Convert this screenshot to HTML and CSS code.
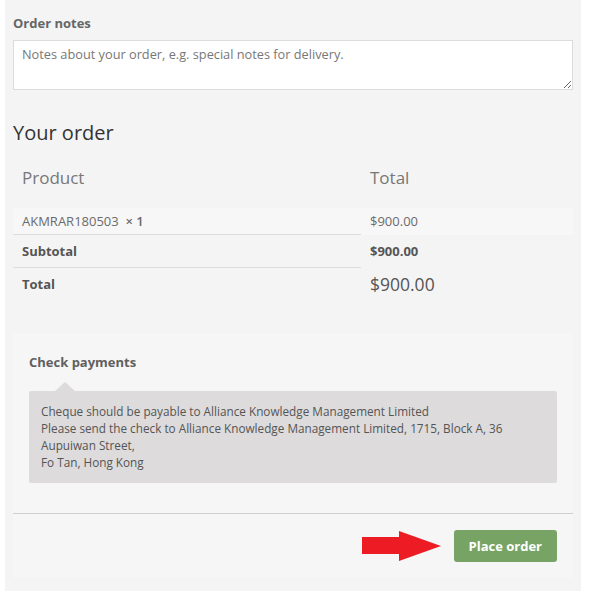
FILE: index.html
```html
<!DOCTYPE html>
<html>
<head>
<meta charset="utf-8">
<link rel="stylesheet" href="styles.css">
</head>
<body>
<div class="panel">
  <div class="notes-label">Order notes</div>
  <textarea class="notes" placeholder="Notes about your order, e.g. special notes for delivery."></textarea>

  <h3 class="order-title">Your order</h3>
  <table class="order-table">
    <thead>
      <tr>
        <th class="col-product">Product</th>
        <th class="col-total">Total</th>
      </tr>
    </thead>
    <tbody>
      <tr class="item-row">
        <td class="col-product">AKMRAR180503&nbsp; <strong class="qty">× 1</strong></td>
        <td class="col-total">$900.00</td>
      </tr>
    </tbody>
    <tfoot>
      <tr class="subtotal-row">
        <th class="col-product">Subtotal</th>
        <td class="col-total"><strong>$900.00</strong></td>
      </tr>
      <tr class="total-row">
        <th class="col-product">Total</th>
        <td class="col-total"><span class="grand">$900.00</span></td>
      </tr>
    </tfoot>
  </table>

  <div class="payment">
    <div class="methods">
      <div class="method-label">Check payments</div>
      <div class="method-box">
        Cheque should be payable to Alliance Knowledge Management Limited<br>
        Please send the check to Alliance Knowledge Management Limited, 1715, Block A, 36 Aupuiwan Street,<br>
        Fo Tan, Hong Kong
      </div>
    </div>
    <div class="place-row">
      <svg class="arrow" width="80" height="32" viewBox="0 0 80 32" aria-hidden="true">
        <polygon points="0,7 37,7 37,1 79,16 37,31 37,24 0,24" fill="#ed1c24"/>
      </svg>
      <button class="place-btn">Place order</button>
    </div>
  </div>
</div>
</body>
</html>
```

FILE: styles.css
```css
* { box-sizing: border-box; }
html, body { margin: 0; padding: 0; background: #ffffff; }
body {
  font-family: "Open Sans", "Liberation Sans", sans-serif;
  font-size: 13px;
  color: #6b6b6b;
}
.panel {
  margin-left: 5px;
  width: 576px;
  min-height: 591px;
  background: #f4f4f4;
  padding: 13px 8px 13px 8px;
}
.notes-label {
  font-weight: 700;
  font-size: 13px;
  line-height: 20px;
  color: #666666;
}
.notes {
  display: block;
  margin-top: 7px;
  width: 560px;
  height: 50px;
  border: 1px solid #dcdcdc;
  background: #ffffff;
  padding: 4px 8px 3px 8px;
  font-family: "Open Sans", "Liberation Sans", sans-serif;
  font-size: 12.75px;
  line-height: 18px;
  color: #555;
  resize: vertical;
  outline: none;
}
.notes::placeholder { color: #777777; opacity: 1; }
.order-title {
  margin: 31px 0 0 0;
  font-size: 20px;
  line-height: 24px;
  font-weight: 400;
  color: #333333;
}
.order-table {
  margin-top: 12px;
  width: 560px;
  border-collapse: collapse;
  table-layout: fixed;
}
.order-table .col-product { width: 348px; }
.order-table th, .order-table td {
  text-align: left;
  padding: 7px 9px;
  font-size: 13px;
  line-height: 18px;
  color: #6b6b6b;
}
.order-table thead th {
  font-size: 17px;
  line-height: 24px;
  font-weight: 400;
  color: #777777;
  padding: 9px 9px 18px 9px;
}
.item-row td {
  background: #f7f7f7;
  padding: 4px 9px;
}
.item-row td.col-product,
.subtotal-row .col-product {
  border-bottom: 1px solid #dddddd;
}
.qty { font-weight: 600; color: #6b6b6b; }
.subtotal-row th, .total-row th { font-weight: 700; color: #555555; }
.subtotal-row strong { color: #555555; }
.total-row th, .total-row td { padding: 4px 9px 6px 9px; }
.grand {
  font-size: 17.5px;
  line-height: 24px;
  color: #555555;
}
.payment {
  margin-top: 31px;
  background: #f6f6f6;
}
.methods {
  padding: 20px 16px 30px 16px;
  border-bottom: 1px solid #cfcfcf;
}
.method-label {
  font-weight: 700;
  font-size: 13px;
  line-height: 18px;
  color: #606060;
}
.method-box {
  position: relative;
  margin-top: 20px;
  background: #dddbdb;
  border-radius: 2px;
  padding: 12px 12px 12px 12px;
  font-size: 11.75px;
  line-height: 17px;
  color: #555555;
}
.method-box::before {
  content: "";
  position: absolute;
  left: 26px;
  top: -9px;
  border-left: 10px solid transparent;
  border-right: 10px solid transparent;
  border-bottom: 9px solid #dddbdb;
}
.place-row {
  display: flex;
  justify-content: flex-end;
  align-items: center;
  gap: 12px;
  padding: 16px 16px 16px 16px;
}
.arrow { display: block; }
.place-btn {
  height: 32px;
  padding: 0 15px;
  background: #77a464;
  border: none;
  border-radius: 3px;
  color: #ffffff;
  font-family: "Open Sans", "Liberation Sans", sans-serif;
  font-weight: 700;
  font-size: 13px;
  line-height: 32px;
}
```
